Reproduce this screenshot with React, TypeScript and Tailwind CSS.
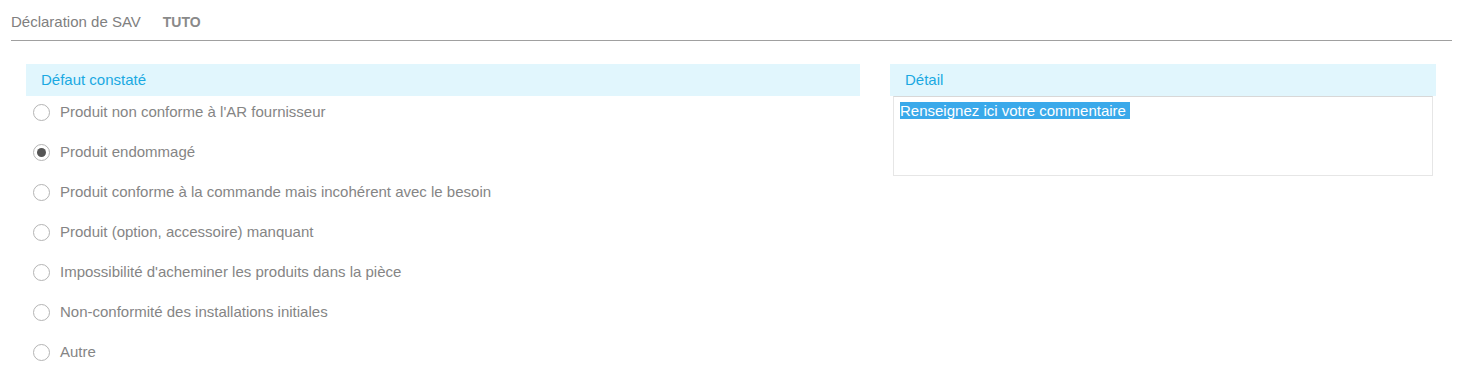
import React, { useState } from 'react';

const options = [
  "Produit non conforme à l'AR fournisseur",
  'Produit endommagé',
  'Produit conforme à la commande mais incohérent avec le besoin',
  'Produit (option, accessoire) manquant',
  "Impossibilité d'acheminer les produits dans la pièce",
  'Non-conformité des installations initiales',
  'Autre',
];

const Radio = ({ checked }: { checked: boolean }) => (
  <span className="flex h-[17px] w-[17px] shrink-0 items-center justify-center rounded-full border border-[#b4b4b4] bg-white">
    {checked && <span className="h-[9px] w-[9px] rounded-full bg-[#555]" />}
  </span>
);

export default function App() {
  const [selected, setSelected] = useState(1);

  return (
    <div className="h-[376px] w-[1463px] bg-white font-['Liberation_Sans',Arial,sans-serif] text-[15px]">
      <div className="mx-[11px] flex h-[41px] items-center gap-[22px] border-b border-[#a0a0a0] pt-[4px]">
        <span className="text-[#808080]">Déclaration de SAV</span>
        <span className="text-[14px] font-bold text-[#8a8a8a]">TUTO</span>
      </div>

      <div className="flex pl-[26px] pt-[23px]">
        <div className="w-[834px]">
          <div className="flex h-[32px] items-center bg-[#e1f6fd] pl-[15px] text-[#1aa9e2]">Défaut constaté</div>
          <div className="-mt-[4px] flex flex-col">
            {options.map((label, i) => (
              <label
                key={label}
                className="flex h-[40px] cursor-pointer items-center gap-[10px] pl-[7px] text-[#858585]"
                onClick={() => setSelected(i)}
              >
                <Radio checked={selected === i} />
                <span>{label}</span>
              </label>
            ))}
          </div>
        </div>

        <div className="ml-[30px] w-[546px]">
          <div className="flex h-[32px] items-center bg-[#e1f6fd] pl-[15px] text-[#1aa9e2]">Détail</div>
          <div className="ml-[3px] h-[80px] w-[540px] border border-[#e6e6e6] border-t-[#d8d8d8] px-[6px] pt-[5px] leading-[17px]">
            <span className="bg-[#3aa9ea] pr-[4px] text-white">Renseignez ici votre commentaire</span>
          </div>
        </div>
      </div>
    </div>
  );
}
